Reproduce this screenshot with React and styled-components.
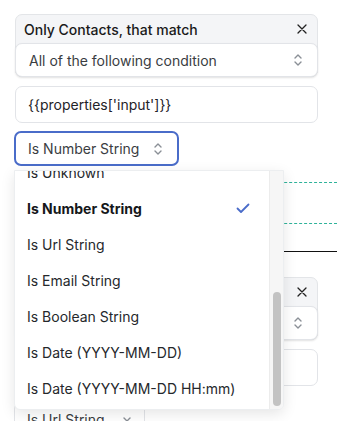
import React from "react";
import styled, { createGlobalStyle } from "styled-components";

const Global = createGlobalStyle`
  html, body { margin: 0; padding: 0; background: #fff; }
  body { font-family: Inter, "Noto Sans", sans-serif; color: #1f2328; }
  * { box-sizing: border-box; }
`;

const Page = styled.div`
  position: relative;
  width: 337px;
  height: 421px;
  overflow: hidden;
  padding: 14px 19px 0 15px;
  display: flex;
  flex-direction: column;
  & > * { flex-shrink: 0; }
`;

const Card = styled.div`
  display: flex;
  flex-direction: column;
  border-radius: 7px;
  background: #f4f5f7;
  border: 1px solid #e3e5e8;
`;

const CardHeader = styled.div`
  height: 28px;
  display: flex;
  align-items: center;
  justify-content: space-between;
  padding: 0 10px 0 8px;
  font-size: 14px;
  font-weight: 500;
  color: #1a1a1a;
`;

const Close = styled.span`
  display: flex;
  color: #222;
`;

const SelectBox = styled.div`
  height: ${(p) => p.$h || 35}px;
  width: ${(p) => (p.$w ? p.$w + "px" : "auto")};
  margin: ${(p) => p.$m || "0"};
  display: flex;
  align-items: center;
  justify-content: space-between;
  padding: 0 ${(p) => p.$pr || 14}px 0 ${(p) => p.$pl || 13}px;
  background: #fff;
  border: ${(p) => (p.$focus ? "2px solid #4a6cc9" : "1px solid #e2e4e8")};
  border-radius: 7px;
  box-shadow: ${(p) => (p.$shadow ? "0 1px 2px rgba(0,0,0,0.12)" : "none")};
  font-size: 14px;
  color: #3a3d42;
`;

const InputBox = styled.div`
  height: 37px;
  margin-top: ${(p) => p.$mt}px;
  display: flex;
  align-items: center;
  padding-left: 12px;
  border: 1px solid #e2e4e8;
  border-radius: 7px;
  background: #fff;
  font-size: 14px;
  color: #1f2328;
`;

const Connector = styled.div`
  position: relative;
  height: 111px;
  margin: 0 -19px 0 -15px;
`;

const Line = styled.div`
  position: absolute;
  left: 60px;
  right: 0;
  top: ${(p) => p.$top}px;
  border-top: ${(p) => (p.$dashed ? "1px dashed #2fb39a" : "1px solid #111")};
`;

const Dropdown = styled.div`
  position: absolute;
  left: 14px;
  top: 170px;
  width: 270px;
  height: 240px;
  background: #fff;
  border: 1px solid #eceef0;
  border-radius: 0 0 6px 6px;
  box-shadow: 0 4px 14px rgba(0, 0, 0, 0.1);
  display: flex;
  overflow: hidden;
  z-index: 5;
`;

const ListArea = styled.div`
  flex: 1;
  overflow: hidden;
  position: relative;
`;

const List = styled.div`
  display: flex;
  flex-direction: column;
  margin-top: -17px;
`;

const Item = styled.div`
  height: 36px;
  flex-shrink: 0;
  display: flex;
  align-items: center;
  justify-content: space-between;
  padding: 0 19px 0 12px;
  font-size: 14px;
  font-weight: ${(p) => (p.$sel ? 700 : 400)};
  color: ${(p) => (p.$sel ? "#15171a" : "#25282c")};
`;

const Track = styled.div`
  width: 14px;
  background: #f6f6f6;
  border-left: 1px solid #ececec;
  display: flex;
  flex-direction: column;
  align-items: center;
  padding-top: 121px;
`;

const Thumb = styled.div`
  width: 8px;
  height: 114px;
  border-radius: 4px;
  background: #c3c3c3;
`;

const Chevrons = ({ color = "#8a8f96" }) => (
  <svg width="10" height="16" viewBox="0 0 10 16" fill="none" stroke={color} strokeWidth="1.4" strokeLinecap="round" strokeLinejoin="round">
    <path d="M2 6 L5 3 L8 6" />
    <path d="M2 10 L5 13 L8 10" />
  </svg>
);

const ChevronDown = () => (
  <svg width="10" height="8" viewBox="0 0 10 8" fill="none" stroke="#8a8f96" strokeWidth="1.4" strokeLinecap="round" strokeLinejoin="round">
    <path d="M2 2 L5 5 L8 2" />
  </svg>
);

const XIcon = () => (
  <svg width="10" height="10" viewBox="0 0 10 10" stroke="#222" strokeWidth="1.3" strokeLinecap="round">
    <path d="M1 1 L9 9 M9 1 L1 9" />
  </svg>
);

const Check = () => (
  <svg width="14" height="11" viewBox="0 0 14 11" fill="none" stroke="#4a6cc9" strokeWidth="1.8" strokeLinecap="round" strokeLinejoin="round">
    <path d="M1.5 5.5 L5 9 L12.5 1.5" />
  </svg>
);

const items = [
  "Is Unknown",
  "Is Number String",
  "Is Url String",
  "Is Email String",
  "Is Boolean String",
  "Is Date (YYYY-MM-DD)",
  "Is Date (YYYY-MM-DD HH:mm)",
];

function FilterCard() {
  return (
    <Card>
      <CardHeader>
        <span>Only Contacts, that match</span>
        <Close>
          <XIcon />
        </Close>
      </CardHeader>
      <SelectBox $h={34} $m="0 -1px -1px -1px" $pl={13} $shadow>
        <span>All of the following condition</span>
        <Chevrons />
      </SelectBox>
    </Card>
  );
}

export default function App() {
  return (
    <>
      <Global />
      <Page>
        <FilterCard />
        <InputBox $mt={9}>{"{{properties['input']}}"}</InputBox>
        <SelectBox $w={165} $h={35} $m="8px 0 0 -1px" $focus $pl={12}>
          <span>Is Number String</span>
          <Chevrons />
        </SelectBox>
        <Connector>
          <Line $dashed $top={16} />
          <Line $dashed $top={57} />
          <Line $top={85} />
        </Connector>
        <FilterCard />
        <InputBox $mt={9}>{"{{properties['input']}}"}</InputBox>
        <SelectBox $w={131} $h={35} $m="16px 0 0 -1px" $pl={12} $pr={12}>
          <span>Is Url String</span>
          <ChevronDown />
        </SelectBox>
        <Dropdown>
          <ListArea>
            <List>
              {items.map((t) => (
                <Item key={t} $sel={t === "Is Number String"}>
                  <span>{t}</span>
                  {t === "Is Number String" && <Check />}
                </Item>
              ))}
            </List>
          </ListArea>
          <Track>
            <Thumb />
          </Track>
        </Dropdown>
      </Page>
    </>
  );
}
